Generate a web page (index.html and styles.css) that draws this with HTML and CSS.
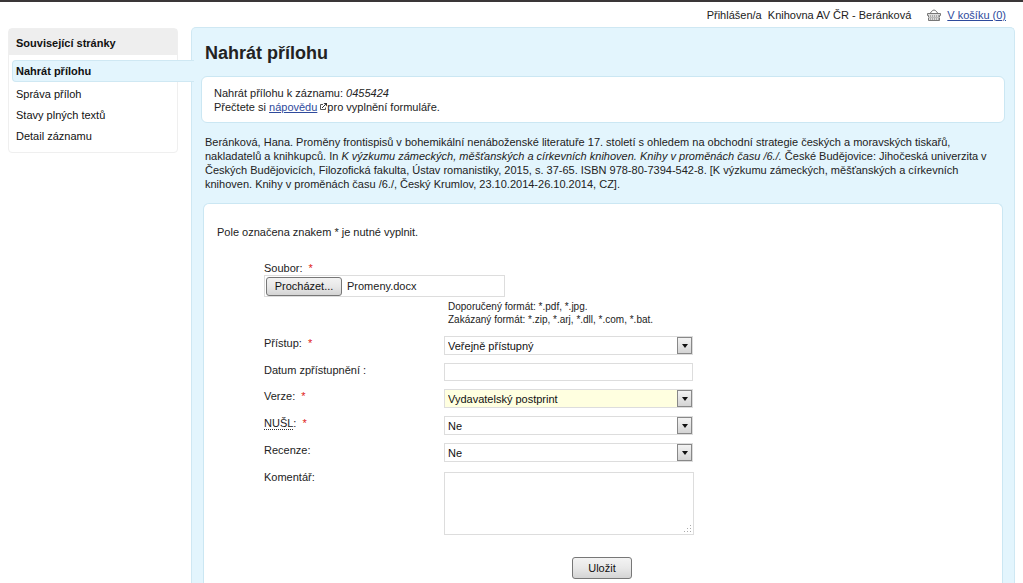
FILE: index.html
```html
<!DOCTYPE html>
<html lang="cs">
<head>
<meta charset="utf-8">
<meta name="viewport" content="width=device-width, initial-scale=1">
<title>Nahrát přílohu</title>
<link rel="stylesheet" href="styles.css">
</head>
<body>
<header class="topbar">
  <span class="user">Přihlášen/a &nbsp;Knihovna AV ČR - Beránková</span>
  <svg class="basket" width="14" height="12" viewBox="0 0 14 12" aria-hidden="true">
    <path d="M2.5 5 L5.5 1.5 Q7 0.5 8.5 1.5 L11.5 5" fill="none" stroke="#777"/>
    <path d="M0.5 4.5 H13.5 V6.5 H12.5 V11.5 H1.5 V6.5 H0.5 Z" fill="#ddd" stroke="#777"/>
    <path d="M3.5 6V11M5.5 6V11M7.5 6V11M9.5 6V11M11.5 6V11" stroke="#aaa"/>
    <path d="M1 8.5H13" stroke="#bbb"/>
  </svg>
  <a class="link" href="#">V košíku (0)</a>
</header>
<div class="layout">
  <nav class="sidebar">
    <h2 class="sidebar-title">Související stránky</h2>
    <ul class="menu">
      <li class="menu-item active"><a href="#">Nahrát přílohu</a></li>
      <li class="menu-item"><a href="#">Správa příloh</a></li>
      <li class="menu-item"><a href="#">Stavy plných textů</a></li>
      <li class="menu-item"><a href="#">Detail záznamu</a></li>
    </ul>
  </nav>
  <main class="content">
    <h1 class="title">Nahrát přílohu</h1>
    <div class="notice">
      <p>Nahrát přílohu k záznamu: <em>0455424</em></p>
      <p>Přečtete si <a class="link" href="#">nápovědu</a><svg class="external" width="7" height="7" viewBox="0 0 7 7" aria-hidden="true"><path d="M3 1.5 H0.5 V6.5 H5.5 V4.5" fill="none" stroke="#555"/><path d="M2 5 L5.5 1.5" fill="none" stroke="#333"/><path d="M3.5 0 H7 V3.5 Z" fill="#333"/></svg>pro vyplnění formuláře.</p>
    </div>
    <p class="citation">Beránková, Hana. Proměny frontispisů v bohemikální nenáboženské literatuře 17. století s ohledem na obchodní strategie českých a moravských tiskařů, nakladatelů a knihkupců. In <em>K výzkumu zámeckých, měšťanských a církevních knihoven. Knihy v proměnách času /6./.</em> České Budějovice: Jihočeská univerzita v Českých Budějovicích, Filozofická fakulta, Ústav romanistiky, 2015, s. 37-65. ISBN 978-80-7394-542-8. [K výzkumu zámeckých, měšťanských a církevních knihoven. Knihy v proměnách času /6./, Český Krumlov, 23.10.2014-26.10.2014, CZ].</p>
    <form class="panel">
      <p class="required-note">Pole označena znakem * je nutné vyplnit.</p>
      <div class="fields">
        <div class="file-field">
          <label for="file">Soubor: <span class="star">*</span></label>
          <div class="file-box">
            <span class="file-button">Procházet...</span>
            <span class="file-name">Promeny.docx</span>
            <input class="file-input" type="file" id="file">
          </div>
        </div>
        <p class="hint">Doporučený formát: *.pdf, *.jpg.<br>Zakázaný formát: *.zip, *.arj, *.dll, *.com, *.bat.</p>
        <div class="row">
          <label for="access">Přístup: <span class="star">*</span></label>
          <div class="select"><select id="access"><option>Veřejně přístupný</option></select><span class="arrow"></span></div>
        </div>
        <div class="row">
          <label for="date">Datum zpřístupnění :</label>
          <input class="text" type="text" id="date">
        </div>
        <div class="row">
          <label for="version">Verze: <span class="star">*</span></label>
          <div class="select changed"><select id="version"><option>Vydavatelský postprint</option></select><span class="arrow"></span></div>
        </div>
        <div class="row">
          <label for="nusl"><abbr>NUŠL</abbr>: <span class="star">*</span></label>
          <div class="select"><select id="nusl"><option>Ne</option></select><span class="arrow"></span></div>
        </div>
        <div class="row">
          <label for="review">Recenze:</label>
          <div class="select"><select id="review"><option>Ne</option></select><span class="arrow"></span></div>
        </div>
        <div class="row">
          <label for="comment">Komentář:</label>
          <textarea class="comment" id="comment"></textarea>
        </div>
      </div>
      <div class="actions"><button class="save" type="submit">Uložit</button></div>
    </form>
  </main>
</div>
</body>
</html>
```
FILE: styles.css
```css
* { box-sizing: border-box; }
body {
  margin: 0;
  min-height: 100vh;
  display: flex;
  flex-direction: column;
  border-top: 2px solid #3a3638;
  background: #fff;
  color: #222;
  font: 11px/14px "Liberation Sans", Arial, sans-serif;
}
h1, h2, p, ul { margin: 0; padding: 0; }
input, select, textarea, button { font: inherit; color: #111; margin: 0; }
.link { color: #2e4a9c; text-decoration: underline; }

.topbar {
  display: flex;
  justify-content: flex-end;
  align-items: center;
  height: 25px;
  padding-right: 17px;
}
.user { margin-right: 16px; }
.basket { margin-right: 6px; }

.layout { flex: 1; display: flex; padding: 0 8px; }

.sidebar {
  flex: none;
  width: 170px;
  height: 125px;
  margin: 1px 13px 0 0;
  border: 1px solid #efefef;
  border-radius: 4px;
}
.sidebar-title {
  height: 26px;
  padding-left: 7px;
  background: #eee;
  color: #111;
  font-size: 11px;
  line-height: 28px;
}
.menu { list-style: none; padding: 5px 0 0 3px; }
.menu-item { padding: 3px 0 4px 4px; }
.menu-item a { color: #111; text-decoration: none; }
.menu-item.active {
  position: relative;
  width: 182px;
  padding: 3px;
  margin-bottom: 2px;
  border: 1px solid #cfe8f3;
  border-right: 0;
  border-radius: 4px 0 0 4px;
  background: #e3f5fd;
  font-weight: bold;
}

.content {
  flex: 1;
  display: flex;
  flex-direction: column;
  min-width: 0;
  padding: 14px 9px 0;
  border: 1px solid #cfe8f3;
  border-bottom: 0;
  border-radius: 5px 5px 0 0;
  background: #e3f5fd;
}
.title { padding-left: 4px; font-size: 18px; line-height: 22px; }
.notice {
  margin-top: 12px;
  padding: 9px 12px 8px;
  border: 1px solid #cbe7f3;
  border-radius: 6px;
  background: #fff;
}
.external { margin: 0 0 1px 3px; }
.citation { margin: 12px 0 0; padding-left: 4px; }

.panel {
  flex: 1;
  margin: 12px 2px 0;
  padding: 21px 12px 0;
  border: 1px solid #cbe7f3;
  border-bottom: 0;
  border-radius: 6px 6px 0 0;
  background: #fff;
}
.required-note { padding-left: 1px; }
.fields { width: 430px; margin: 22px 0 0 48px; }
.star { margin-left: 3px; color: #e02020; }
.file-field label { display: block; }
.file-box {
  position: relative;
  display: flex;
  align-items: center;
  width: 241px;
  height: 22px;
  padding-left: 1px;
  border: 1px solid #ddd;
}
.file-button {
  width: 76px;
  margin-right: 5px;
  border: 1px solid #777;
  border-radius: 3px;
  background: linear-gradient(#f3f3f3, #e8e8e8 50%, #d4d4d4);
  color: #111;
  line-height: 17px;
  text-align: center;
}
.file-input { position: absolute; inset: 0; width: 100%; height: 100%; opacity: 0; }
.hint { margin: 3px 0 10px 184px; font-size: 10px; line-height: 13px; }

.row { display: grid; grid-template-columns: 180px 1fr; margin-bottom: 8px; }
abbr { border-bottom: 1px dotted #333; text-decoration: none; }
.select { position: relative; height: 19px; width: 249px; }
.select select {
  display: block;
  width: 100%;
  height: 19px;
  padding: 0 18px 0 3px;
  appearance: none;
  border: 1px solid #ddd;
  border-radius: 0;
  background: #fff;
}
.select.changed select { background: #ffffe0; }
.arrow {
  position: absolute;
  top: 1px;
  right: 1px;
  display: grid;
  place-items: center;
  width: 15px;
  height: 17px;
  border: 1px solid #888;
  background: linear-gradient(#f3f3f3, #d4d4d4);
  pointer-events: none;
}
.arrow::before {
  content: "";
  border: 3px solid transparent;
  border-top: 4px solid #111;
  border-bottom: 0;
}
.text { width: 249px; height: 18px; border: 1px solid #ddd; }
.comment {
  width: 250px;
  height: 63px;
  margin-top: 2px;
  border: 1px solid #ddd;
  resize: both;
}
.comment::-webkit-resizer {
  background:
    linear-gradient(#aaa, #aaa) 12px 6px / 1px 1px no-repeat,
    linear-gradient(#aaa, #aaa) 9px 9px / 1px 1px no-repeat,
    linear-gradient(#aaa, #aaa) 12px 9px / 1px 1px no-repeat,
    linear-gradient(#aaa, #aaa) 6px 12px / 1px 1px no-repeat,
    linear-gradient(#aaa, #aaa) 9px 12px / 1px 1px no-repeat,
    linear-gradient(#aaa, #aaa) 12px 12px / 1px 1px no-repeat;
}
.actions { margin: 22px 0 0 356px; }
.save {
  display: block;
  width: 60px;
  height: 22px;
  padding: 0;
  border: 1px solid #777;
  border-radius: 3px;
  background: linear-gradient(#f3f3f3, #e8e8e8 50%, #d4d4d4);
}
```
